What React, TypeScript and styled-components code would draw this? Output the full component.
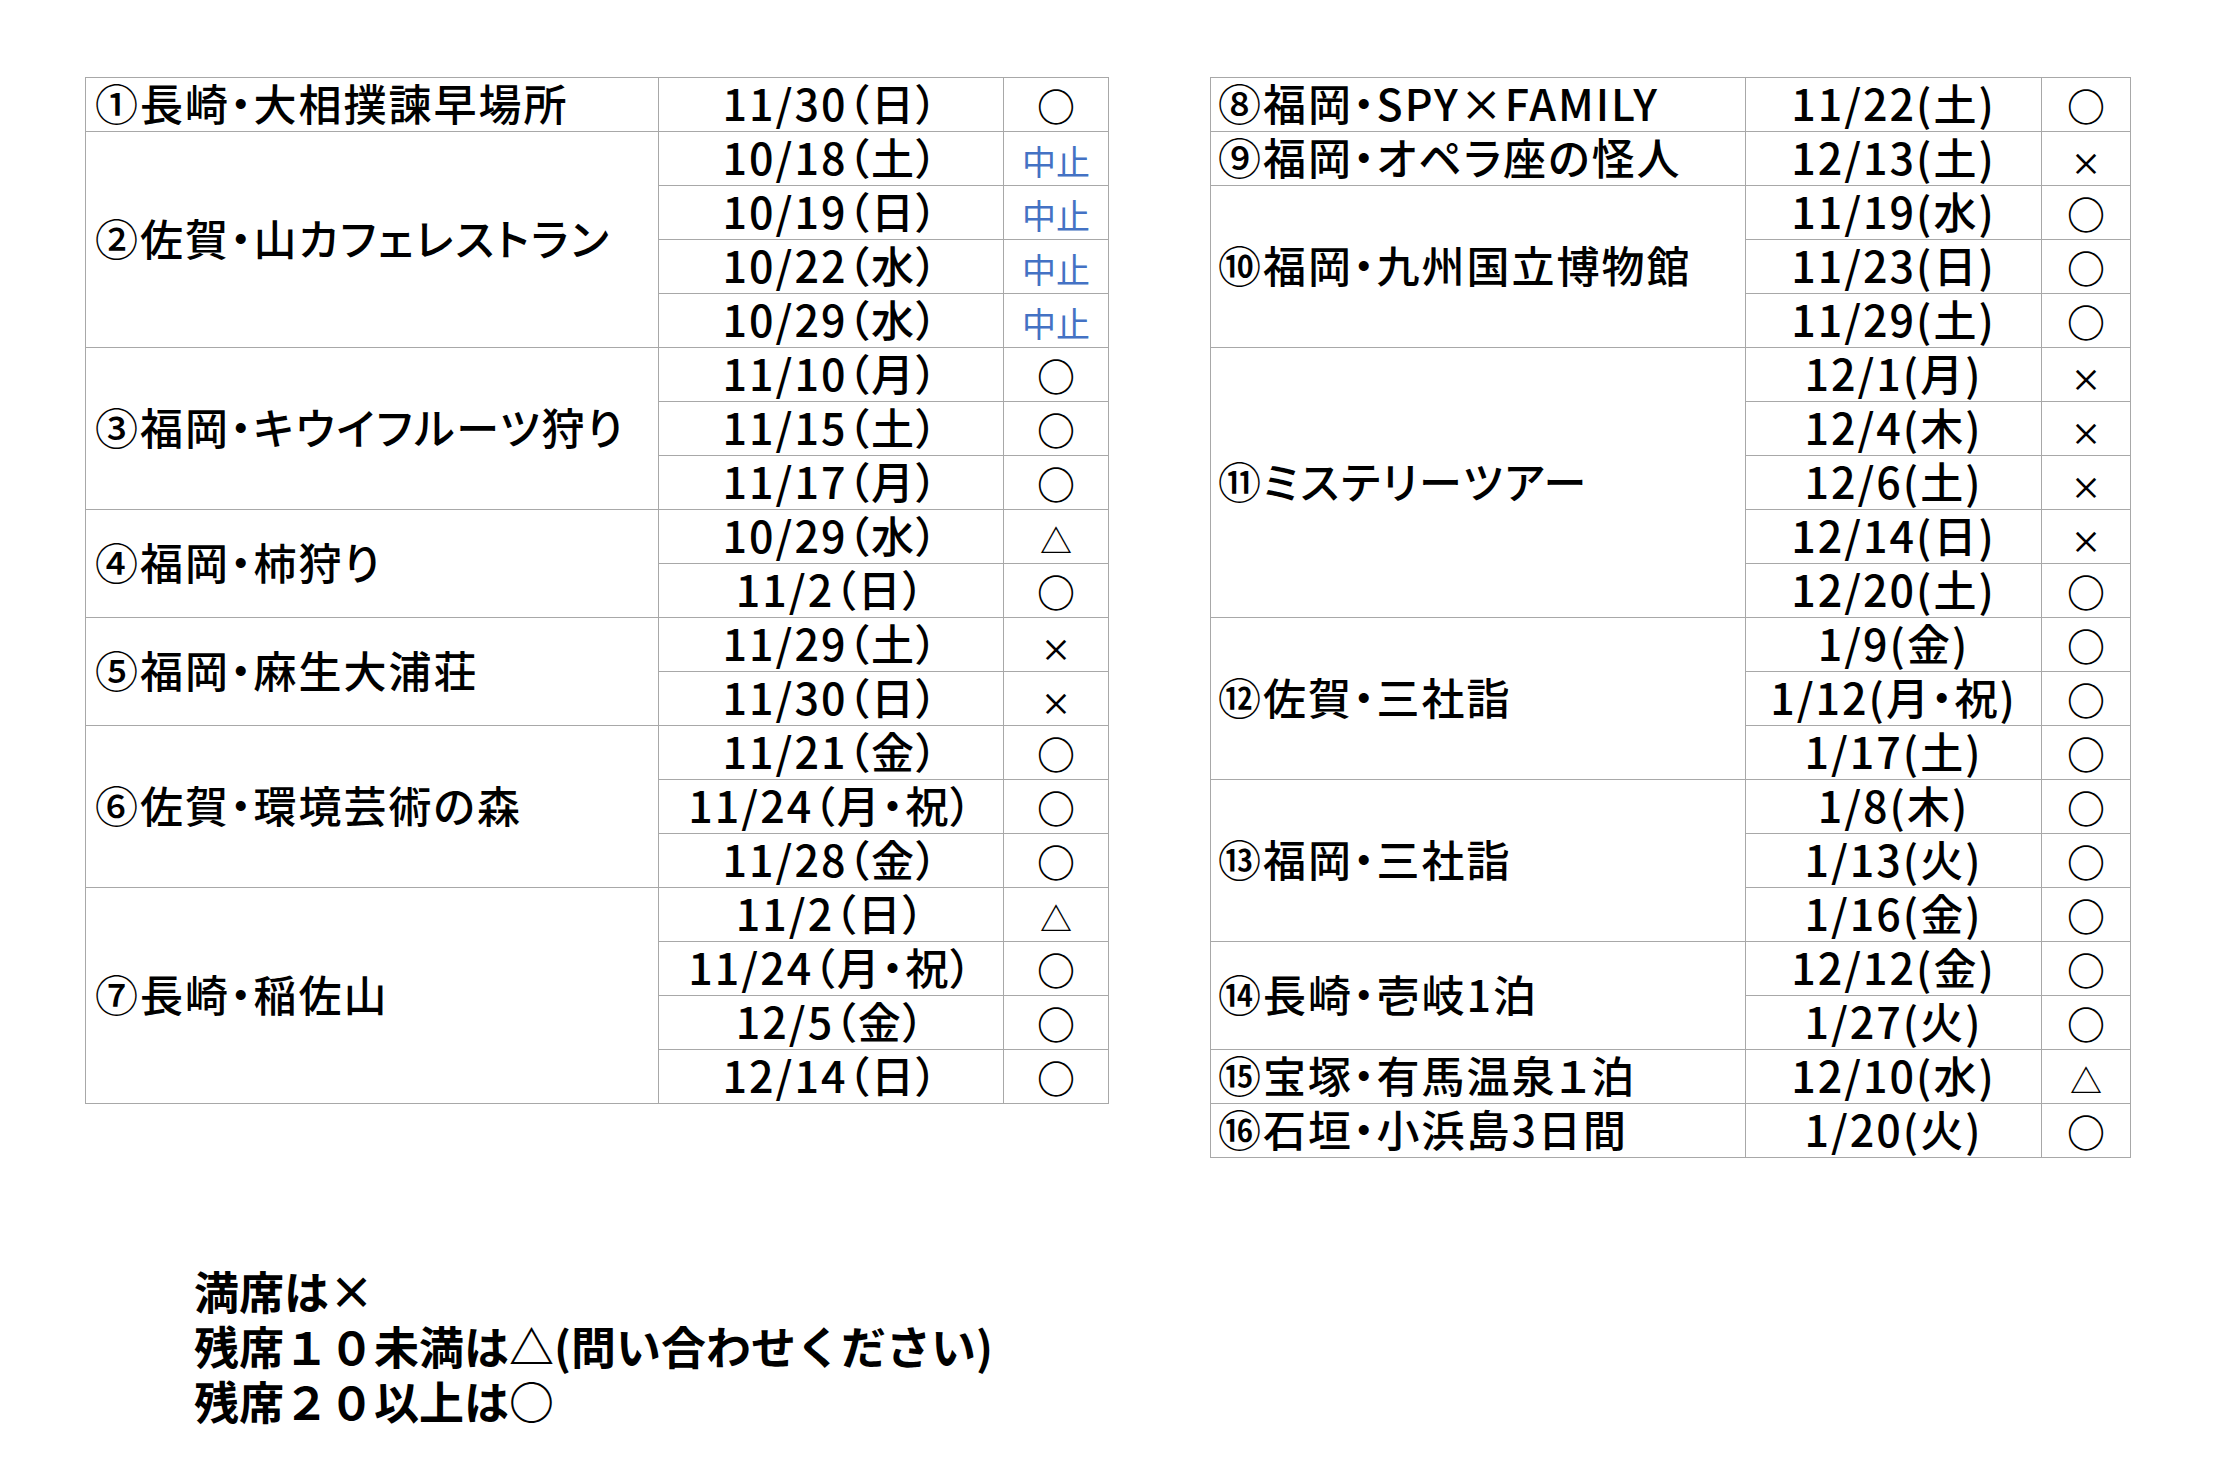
import React from "react";
import styled, { createGlobalStyle } from "styled-components";

const GlobalStyle = createGlobalStyle`
  html, body { margin: 0; padding: 0; background: #ffffff; }
  body {
    font-family: "Noto Sans CJK JP", "Noto Sans", sans-serif;
    color: #000000;
  }
`;

const Page = styled.div`
  width: 2218px;
  height: 1478px;
  box-sizing: border-box;
  padding: 77px 0 0 85px;
  display: flex;
  flex-direction: column;
`;

const Tables = styled.div`
  display: flex;
  align-items: flex-start;
  gap: 101px;
`;

const Table = styled.table<{ $w: number }>`
  border-collapse: collapse;
  table-layout: fixed;
  width: ${(p) => p.$w}px;
`;

const Col = styled.col<{ $w: number }>`
  width: ${(p) => p.$w}px;
`;

const Cell = styled.td`
  border: 1px solid #a8a8a8;
  height: 54px;
  box-sizing: border-box;
  padding: 0 0 5px 0;
  font-size: 43px;
  line-height: 48px;
  font-weight: 500;
  white-space: nowrap;
  vertical-align: middle;
`;

const NameCell = styled(Cell)<{ $pad: number }>`
  text-align: left;
  padding-left: ${(p) => p.$pad}px;
  font-feature-settings: "palt";
  letter-spacing: 2px;
`;

const DateCell = styled(Cell)`
  text-align: center;
  font-feature-settings: "palt";
  letter-spacing: 2px;
`;

const StatusCell = styled(Cell)`
  text-align: center;
`;

type Kind = "ok" | "full" | "few" | "cancel";

const Mark = styled.span<{ $kind: Kind }>`
  display: inline-block;
  line-height: 1;
  color: ${(p) => (p.$kind === "cancel" ? "#4472c4" : "#000000")};
  font-size: ${(p) =>
    p.$kind === "ok" ? 38 : p.$kind === "full" ? 31 : p.$kind === "few" ? 32 : 34}px;
  font-weight: ${(p) => (p.$kind === "ok" ? 700 : p.$kind === "cancel" ? 400 : 500)};
`;

const Legend = styled.div`
  margin-top: 105px;
  margin-left: 109px;
  font-weight: 700;
  font-size: 45px;
  line-height: 55px;
`;

const LegendLine = styled.div`
  white-space: nowrap;
`;

type Item = { date: string; kind: Kind };
type Group = { name: string; items: Item[] };

const markText: Record<Kind, string> = {
  ok: "○",
  full: "×",
  few: "△",
  cancel: "中止",
};

const leftGroups: Group[] = [
  { name: "①長崎・大相撲諫早場所", items: [{ date: "11/30（日）", kind: "ok" }] },
  {
    name: "②佐賀・山カフェレストラン",
    items: [
      { date: "10/18（土）", kind: "cancel" },
      { date: "10/19（日）", kind: "cancel" },
      { date: "10/22（水）", kind: "cancel" },
      { date: "10/29（水）", kind: "cancel" },
    ],
  },
  {
    name: "③福岡・キウイフルーツ狩り",
    items: [
      { date: "11/10（月）", kind: "ok" },
      { date: "11/15（土）", kind: "ok" },
      { date: "11/17（月）", kind: "ok" },
    ],
  },
  {
    name: "④福岡・柿狩り",
    items: [
      { date: "10/29（水）", kind: "few" },
      { date: "11/2（日）", kind: "ok" },
    ],
  },
  {
    name: "⑤福岡・麻生大浦荘",
    items: [
      { date: "11/29（土）", kind: "full" },
      { date: "11/30（日）", kind: "full" },
    ],
  },
  {
    name: "⑥佐賀・環境芸術の森",
    items: [
      { date: "11/21（金）", kind: "ok" },
      { date: "11/24（月・祝）", kind: "ok" },
      { date: "11/28（金）", kind: "ok" },
    ],
  },
  {
    name: "⑦長崎・稲佐山",
    items: [
      { date: "11/2（日）", kind: "few" },
      { date: "11/24（月・祝）", kind: "ok" },
      { date: "12/5（金）", kind: "ok" },
      { date: "12/14（日）", kind: "ok" },
    ],
  },
];

const rightGroups: Group[] = [
  { name: "⑧福岡・SPY×FAMILY", items: [{ date: "11/22(土)", kind: "ok" }] },
  { name: "⑨福岡・オペラ座の怪人", items: [{ date: "12/13(土)", kind: "full" }] },
  {
    name: "⑩福岡・九州国立博物館",
    items: [
      { date: "11/19(水)", kind: "ok" },
      { date: "11/23(日)", kind: "ok" },
      { date: "11/29(土)", kind: "ok" },
    ],
  },
  {
    name: "⑪ミステリーツアー",
    items: [
      { date: "12/1(月)", kind: "full" },
      { date: "12/4(木)", kind: "full" },
      { date: "12/6(土)", kind: "full" },
      { date: "12/14(日)", kind: "full" },
      { date: "12/20(土)", kind: "ok" },
    ],
  },
  {
    name: "⑫佐賀・三社詣",
    items: [
      { date: "1/9(金)", kind: "ok" },
      { date: "1/12(月・祝)", kind: "ok" },
      { date: "1/17(土)", kind: "ok" },
    ],
  },
  {
    name: "⑬福岡・三社詣",
    items: [
      { date: "1/8(木)", kind: "ok" },
      { date: "1/13(火)", kind: "ok" },
      { date: "1/16(金)", kind: "ok" },
    ],
  },
  {
    name: "⑭長崎・壱岐1泊",
    items: [
      { date: "12/12(金)", kind: "ok" },
      { date: "1/27(火)", kind: "ok" },
    ],
  },
  { name: "⑮宝塚・有馬温泉１泊", items: [{ date: "12/10(水)", kind: "few" }] },
  { name: "⑯石垣・小浜島3日間", items: [{ date: "1/20(火)", kind: "ok" }] },
];

function Schedule({
  groups,
  widths,
  pad,
}: {
  groups: Group[];
  widths: [number, number, number];
  pad: number;
}) {
  const total = widths[0] + widths[1] + widths[2];
  return (
    <Table $w={total}>
      <colgroup>
        <Col $w={widths[0]} />
        <Col $w={widths[1]} />
        <Col $w={widths[2]} />
      </colgroup>
      <tbody>
        {groups.map((g) =>
          g.items.map((it, i) => (
            <tr key={g.name + i}>
              {i === 0 && (
                <NameCell $pad={pad} rowSpan={g.items.length}>
                  {g.name}
                </NameCell>
              )}
              <DateCell>{it.date}</DateCell>
              <StatusCell>
                <Mark $kind={it.kind}>{markText[it.kind]}</Mark>
              </StatusCell>
            </tr>
          ))
        )}
      </tbody>
    </Table>
  );
}

export default function App() {
  return (
    <>
      <GlobalStyle />
      <Page>
        <Tables>
          <Schedule groups={leftGroups} widths={[573, 345, 105]} pad={9} />
          <Schedule groups={rightGroups} widths={[535, 296, 89]} pad={7} />
        </Tables>
        <Legend>
          <LegendLine>満席は×</LegendLine>
          <LegendLine>残席１０未満は△(問い合わせください)</LegendLine>
          <LegendLine>残席２０以上は○</LegendLine>
        </Legend>
      </Page>
    </>
  );
}
